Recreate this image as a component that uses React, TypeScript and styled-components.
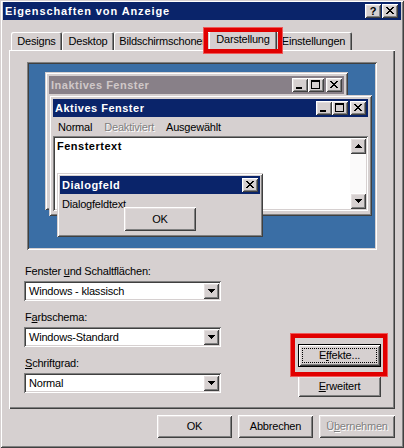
import React from 'react';
import styled, { createGlobalStyle, css } from 'styled-components';

const FACE = '#d6d0d0';
const LIGHT = '#ffffff';
const SHADOW = '#808080';
const DARK = '#404040';
const TITLE = '#0a246a';

const GlobalStyle = createGlobalStyle`
  html, body { margin: 0; padding: 0; background: ${FACE}; }
  body { font-family: "Liberation Sans", Arial, sans-serif; font-size: 11px; letter-spacing: -0.2px; color: #000; }
  * { box-sizing: border-box; }
`;

const boldText = css`
  font-weight: bold;
  letter-spacing: 0.5px;
`;

const raisedBevel = css`
  box-shadow: inset 1px 1px ${LIGHT}, inset -1px -1px ${DARK}, inset 2px 2px #e4dede, inset -2px -2px ${SHADOW};
`;
const windowBevel = css`
  box-shadow: inset 1px 1px ${FACE}, inset -1px -1px ${DARK}, inset 2px 2px ${LIGHT}, inset -2px -2px ${SHADOW};
`;
const sunkenBevel = css`
  box-shadow: inset 1px 1px ${SHADOW}, inset -1px -1px ${LIGHT}, inset 2px 2px ${DARK}, inset -2px -2px ${FACE};
`;

const Frame = styled.div`
  width: 404px;
  height: 448px;
  background: ${FACE};
  padding: 2px 3px 3px 3px;
  display: flex;
  flex-direction: column;
  ${windowBevel};
`;

const TitleBar = styled.div`
  height: 18px;
  flex-shrink: 0;
  background: ${TITLE};
  color: #fff;
  font-weight: bold;
  letter-spacing: 0.9px;
  display: flex;
  align-items: center;
  padding: 0 3px 0 2px;
`;

const TitleText = styled.span`
  flex: 1;
  line-height: 18px;
  white-space: nowrap;
  overflow: hidden;
`;

const CaptionGroup = styled.div<{ $gap: number }>`
  display: flex;
  align-items: center;
  gap: ${(p) => p.$gap}px;
`;

const CaptionPair = styled.div`
  display: flex;
`;

const CaptionButton = styled.div`
  width: 16px;
  height: 14px;
  flex-shrink: 0;
  background: ${FACE};
  ${raisedBevel};
  color: #000;
  font-weight: bold;
  letter-spacing: 0;
  font-size: 11px;
  line-height: 14px;
  text-align: center;
  svg { display: block; }
`;

const Body = styled.div`
  flex: 1;
  display: flex;
  flex-direction: column;
  padding: 10px 6px 0 6px;
`;

const TabStrip = styled.div`
  height: 20px;
  flex-shrink: 0;
  display: flex;
  align-items: flex-end;
  padding-left: 2px;
`;

const Tab = styled.div<{ $active?: boolean; $w: number }>`
  position: relative;
  width: ${(p) => p.$w}px;
  height: ${(p) => (p.$active ? 21 : 18)}px;
  margin: ${(p) => (p.$active ? '0 -2px -1px -2px' : '0')};
  z-index: ${(p) => (p.$active ? 2 : 1)};
  padding-top: 3px;
  line-height: 13px;
  text-align: center;
  white-space: nowrap;
  background: ${FACE};
  border-radius: 2px 2px 0 0;
  box-shadow: inset 1px 1px ${LIGHT}, inset -1px 0 ${DARK}, inset -2px 0 ${SHADOW};
`;

const Highlight = styled.div<{ $t: number; $r: number; $b: number; $l: number }>`
  position: absolute;
  top: ${(p) => p.$t}px;
  right: ${(p) => p.$r}px;
  bottom: ${(p) => p.$b}px;
  left: ${(p) => p.$l}px;
  border: 4px solid #e10000;
  box-shadow: 0 0 0 1px #ee5a5a;
  pointer-events: none;
  z-index: 5;
`;

const Panel = styled.div`
  height: 359px;
  flex-shrink: 0;
  background: ${FACE};
  box-shadow: inset 1px 1px ${LIGHT}, inset -1px -1px ${DARK}, inset -2px -2px ${SHADOW};
  padding: 12px 14px 0 15px;
  display: flex;
  flex-direction: column;
`;

const Preview = styled.div`
  position: relative;
  width: 350px;
  height: 188px;
  margin-left: 3px;
  flex-shrink: 0;
  background: #3a6ea5;
  ${sunkenBevel};
`;

const MiniWindow = styled.div<{ $x: number; $y: number; $w: number; $h: number; $edge: number }>`
  position: absolute;
  left: ${(p) => p.$x}px;
  top: ${(p) => p.$y}px;
  width: ${(p) => p.$w}px;
  height: ${(p) => p.$h}px;
  padding: ${(p) => p.$edge}px;
  background: ${FACE};
  display: flex;
  flex-direction: column;
  ${windowBevel};
`;

const MiniTitle = styled.div<{ $inactive?: boolean }>`
  height: 18px;
  flex-shrink: 0;
  display: flex;
  align-items: center;
  padding: 0 2px;
  background: ${(p) => (p.$inactive ? '#888088' : TITLE)};
  color: ${(p) => (p.$inactive ? '#d0c8c8' : '#fff')};
  ${boldText};
`;

const MenuBar = styled.div`
  height: 19px;
  flex-shrink: 0;
  display: flex;
  align-items: center;
  gap: 12px;
  padding-left: 5px;
`;

const MenuItem = styled.span<{ $disabled?: boolean }>`
  color: ${(p) => (p.$disabled ? SHADOW : '#000')};
  text-shadow: ${(p) => (p.$disabled ? `1px 1px ${LIGHT}` : 'none')};
`;

const TextWell = styled.div`
  flex: 1;
  margin-bottom: 1px;
  padding: 2px;
  display: flex;
  background: #fff;
  ${sunkenBevel};
`;

const WellText = styled.div`
  flex: 1;
  padding: 2px 0 0 2px;
  ${boldText};
  line-height: 13px;
`;

const ScrollBar = styled.div`
  width: 16px;
  display: flex;
  flex-direction: column;
  justify-content: space-between;
  background: #fbfafa;
`;

const ArrowButton = styled.div`
  width: 16px;
  height: 16px;
  flex-shrink: 0;
  background: ${FACE};
  ${raisedBevel};
  display: flex;
  align-items: center;
  justify-content: center;
  svg { display: block; }
`;

const DialogText = styled.div`
  padding: 4px 0 0 2px;
  line-height: 13px;
`;

const DialogOk = styled.div`
  position: absolute;
  left: 67px;
  top: 34px;
  width: 72px;
  height: 24px;
  background: ${FACE};
  ${raisedBevel};
  line-height: 24px;
  text-align: center;
`;

const Lower = styled.div`
  display: flex;
  justify-content: space-between;
  margin-top: 15px;
`;

const Fields = styled.div`
  width: 197px;
  display: flex;
  flex-direction: column;
`;

const FieldLabel = styled.div`
  height: 13px;
  line-height: 13px;
  margin: 0 0 3px 1px;
  white-space: nowrap;
`;

const Combo = styled.div`
  height: 20px;
  margin-bottom: 10px;
  padding: 2px;
  display: flex;
  background: #fff;
  ${sunkenBevel};
`;

const ComboText = styled.div`
  flex: 1;
  padding-left: 3px;
  line-height: 16px;
`;

const SideButtons = styled.div`
  width: 83px;
  display: flex;
  flex-direction: column;
  gap: 9px;
  padding-top: 79px;
`;

const HighlightWrap = styled.div`
  position: relative;
`;

const Button = styled.div<{ $w: number; $h?: number; $default?: boolean; $disabled?: boolean }>`
  position: relative;
  width: ${(p) => p.$w}px;
  height: ${(p) => p.$h ?? 23}px;
  background: ${FACE};
  line-height: ${(p) => p.$h ?? 23}px;
  text-align: center;
  white-space: nowrap;
  color: ${(p) => (p.$disabled ? SHADOW : '#000')};
  text-shadow: ${(p) => (p.$disabled ? `1px 1px ${LIGHT}` : 'none')};
  ${(p) =>
    p.$default
      ? css`
          box-shadow: inset 0 0 0 1px #000, inset 2px 2px ${LIGHT}, inset -2px -2px ${DARK},
            inset 3px 3px #e4dede, inset -3px -3px ${SHADOW};
        `
      : raisedBevel};
`;

const FocusRing = styled.span`
  position: absolute;
  inset: 4px;
  border: 1px dotted #000;
  pointer-events: none;
`;

const Key = styled.span`
  text-decoration: underline;
  text-underline-offset: 1px;
`;

const ButtonRow = styled.div`
  display: flex;
  justify-content: flex-end;
  gap: 6px;
  margin-top: 6px;
`;

const Px = ({ d }: { d: string }) => <path d={d} fill="#000" />;

const CloseGlyph = () => (
  <svg width="16" height="14" viewBox="0 0 16 14" shapeRendering="crispEdges">
    <Px d="M4 3h2v1h-2z M10 3h2v1h-2z M5 4h2v1h-2z M9 4h2v1h-2z M6 5h4v1h-4z M7 6h2v1h-2z M6 7h4v1h-4z M5 8h2v1h-2z M9 8h2v1h-2z M4 9h2v1h-2z M10 9h2v1h-2z" />
  </svg>
);

const MinGlyph = () => (
  <svg width="16" height="14" viewBox="0 0 16 14" shapeRendering="crispEdges">
    <Px d="M4 9h6v2h-6z" />
  </svg>
);

const MaxGlyph = () => (
  <svg width="16" height="14" viewBox="0 0 16 14" shapeRendering="crispEdges">
    <Px d="M3 2h9v2h-9z M3 4h1v6h-1z M11 4h1v6h-1z M3 10h9v1h-9z" />
  </svg>
);

const Arrow = ({ up }: { up?: boolean }) => (
  <svg width="7" height="4" viewBox="0 0 7 4" shapeRendering="crispEdges">
    <Px d={up ? 'M3 0h1v1h-1z M2 1h3v1h-3z M1 2h5v1h-5z M0 3h7v1h-7z' : 'M0 0h7v1h-7z M1 1h5v1h-5z M2 2h3v1h-3z M3 3h1v1h-1z'} />
  </svg>
);

const SizeButtons = () => (
  <CaptionGroup $gap={2}>
    <CaptionPair>
      <CaptionButton><MinGlyph /></CaptionButton>
      <CaptionButton><MaxGlyph /></CaptionButton>
    </CaptionPair>
    <CaptionButton><CloseGlyph /></CaptionButton>
  </CaptionGroup>
);

const ComboBox = ({ value }: { value: string }) => (
  <Combo>
    <ComboText>{value}</ComboText>
    <ArrowButton><Arrow /></ArrowButton>
  </Combo>
);

const tabs = [
  { label: 'Designs', w: 51 },
  { label: 'Desktop', w: 52 },
  { label: 'Bildschirmschoner', w: 97 },
  { label: 'Darstellung', w: 68, active: true },
  { label: 'Einstellungen', w: 77 },
];

export default function App() {
  return (
    <>
      <GlobalStyle />
      <Frame>
        <TitleBar>
          <TitleText>Eigenschaften von Anzeige</TitleText>
          <CaptionGroup $gap={1}>
            <CaptionButton>?</CaptionButton>
            <CaptionButton><CloseGlyph /></CaptionButton>
          </CaptionGroup>
        </TitleBar>
        <Body>
          <TabStrip>
            {tabs.map((t) => (
              <Tab key={t.label} $w={t.w} $active={t.active}>
                {t.label}
                {t.active && <Highlight $t={-2} $r={-5} $b={-2} $l={-5} />}
              </Tab>
            ))}
          </TabStrip>
          <Panel>
            <Preview>
              <MiniWindow $x={18} $y={10} $w={303} $h={138} $edge={4}>
                <MiniTitle $inactive>
                  <TitleText>Inaktives Fenster</TitleText>
                  <SizeButtons />
                </MiniTitle>
              </MiniWindow>
              <MiniWindow $x={22} $y={33} $w={323} $h={121} $edge={4}>
                <MiniTitle>
                  <TitleText>Aktives Fenster</TitleText>
                  <SizeButtons />
                </MiniTitle>
                <MenuBar>
                  <MenuItem>Normal</MenuItem>
                  <MenuItem $disabled>Deaktiviert</MenuItem>
                  <MenuItem>Ausgewählt</MenuItem>
                </MenuBar>
                <TextWell>
                  <WellText>Fenstertext</WellText>
                  <ScrollBar>
                    <ArrowButton><Arrow up /></ArrowButton>
                    <ArrowButton><Arrow /></ArrowButton>
                  </ScrollBar>
                </TextWell>
              </MiniWindow>
              <MiniWindow $x={30} $y={111} $w={206} $h={64} $edge={3}>
                <MiniTitle>
                  <TitleText>Dialogfeld</TitleText>
                  <CaptionButton><CloseGlyph /></CaptionButton>
                </MiniTitle>
                <DialogText>Dialogfeldtext</DialogText>
                <DialogOk>OK</DialogOk>
              </MiniWindow>
            </Preview>
            <Lower>
              <Fields>
                <FieldLabel>Fenster <Key>u</Key>nd Schaltflächen:</FieldLabel>
                <ComboBox value="Windows - klassisch" />
                <FieldLabel>F<Key>a</Key>rbschema:</FieldLabel>
                <ComboBox value="Windows-Standard" />
                <FieldLabel><Key>S</Key>chriftgrad:</FieldLabel>
                <ComboBox value="Normal" />
              </Fields>
              <SideButtons>
                <HighlightWrap>
                  <Button $w={83} $default>
                    E<Key>f</Key>fekte...
                    <FocusRing />
                  </Button>
                  <Highlight $t={-10} $r={-6} $b={-9} $l={-7} />
                </HighlightWrap>
                <Button $w={83} $h={21}><Key>E</Key>rweitert</Button>
              </SideButtons>
            </Lower>
          </Panel>
          <ButtonRow>
            <Button $w={75}>OK</Button>
            <Button $w={75}>Abbrechen</Button>
            <Button $w={76} $disabled>Ü<Key>b</Key>ernehmen</Button>
          </ButtonRow>
        </Body>
      </Frame>
    </>
  );
}
